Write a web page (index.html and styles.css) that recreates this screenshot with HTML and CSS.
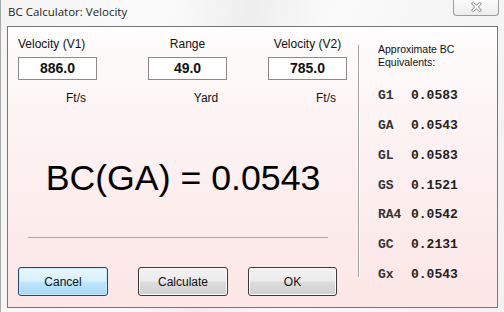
FILE: index.html
```html
<!DOCTYPE html>
<html lang="en">
<head>
    <meta charset="UTF-8">
    <title>BC Calculator: Velocity</title>
    <link rel="stylesheet" href="styles.css">
</head>
<body>
    <div class="window">
        <div class="titlebar">
            <span class="title">BC Calculator: Velocity</span>
            <div class="close">
                <svg width="13" height="10" viewBox="0 0 13 10">
                    <path d="M1.5 1.5 L3.5 0.5 L6.5 3 L9.5 0.5 L11.5 1.5 L8.5 5 L11.5 8.5 L9.5 9.5 L6.5 7 L3.5 9.5 L1.5 8.5 L4.5 5 Z" fill="#fafafa" stroke="#8c8c8c" stroke-width="1" stroke-linejoin="round"/>
                </svg>
            </div>
        </div>

        <div class="client">
            <div class="main">
                <div class="fields">
                    <div class="field first">
                        <div class="label">Velocity (V1)</div>
                        <div class="box">886.0</div>
                        <div class="unit">Ft/s</div>
                    </div>
                    <div class="field second">
                        <div class="label">Range</div>
                        <div class="box">49.0</div>
                        <div class="unit">Yard</div>
                    </div>
                    <div class="field">
                        <div class="label">Velocity (V2)</div>
                        <div class="box">785.0</div>
                        <div class="unit">Ft/s</div>
                    </div>
                </div>

                <div class="result">BC(GA) = 0.0543</div>

                <div class="rule"></div>

                <div class="buttons">
                    <button class="btn default">Cancel</button>
                    <button class="btn calc">Calculate</button>
                    <button class="btn ok">OK</button>
                </div>
            </div>

            <div class="divider"></div>

            <div class="side">
                <div class="side-head">Approximate BC<br>Equivalents:</div>
                <div class="eq-list">
                    <span class="eq-name">G1</span><span class="eq-val">0.0583</span>
                    <span class="eq-name">GA</span><span class="eq-val">0.0543</span>
                    <span class="eq-name">GL</span><span class="eq-val">0.0583</span>
                    <span class="eq-name">GS</span><span class="eq-val">0.1521</span>
                    <span class="eq-name">RA4</span><span class="eq-val">0.0542</span>
                    <span class="eq-name">GC</span><span class="eq-val">0.2131</span>
                    <span class="eq-name">Gx</span><span class="eq-val">0.0543</span>
                </div>
            </div>
        </div>
    </div>
</body>
</html>
```

FILE: styles.css
```css
body {
    margin: 0;
    font-family: "Liberation Sans", Arial, sans-serif;
    background: #f0f0f0;
}
.window {
    width: 504px;
    height: 312px;
    box-sizing: border-box;
    border-left: 1px solid #a8a8a8;
    background: linear-gradient(100deg, #f4f4f4 0%, #fbfbfb 30%, #eeeeee 45%, #fafafa 60%, #f2f2f2 100%);
    overflow: hidden;
}
.titlebar {
    height: 26px;
    display: flex;
    align-items: flex-start;
}
.title {
    font-family: "Open Sans", "Noto Sans", sans-serif;
    font-size: 11.5px;
    line-height: 16px;
    color: #1e1e1e;
    padding: 4px 0 0 7px;
}
.close {
    margin-left: auto;
    margin-right: 5px;
    margin-top: -1px;
    width: 46px;
    height: 17px;
    box-sizing: border-box;
    border: 1px solid #9c9c9c;
    border-top: none;
    border-radius: 0 0 4px 4px;
    background: linear-gradient(#fdfdfd, #ececec);
    display: flex;
    align-items: center;
    justify-content: center;
}
.client {
    margin: 0 6px 0 6px;
    height: 282px;
    box-sizing: border-box;
    border: 1px solid #777777;
    background: linear-gradient(#fefdfd 0%, #fdf2f2 40%, #fce6e6 100%);
    display: flex;
}
.main {
    width: 350px;
}
.fields {
    display: flex;
    padding: 10px 0 0 10px;
}
.field {
    width: 79px;
    display: flex;
    flex-direction: column;
    align-items: center;
    margin-right: 41px;
}
.field.first {
    margin-right: 51px;
    align-items: flex-start;
}
.label {
    font-size: 12px;
    line-height: 14px;
    color: #111;
}
.box {
    margin-top: 6px;
    width: 79px;
    height: 23px;
    box-sizing: border-box;
    border: 1px solid #8a8a8a;
    background: #fff;
    font-weight: bold;
    font-size: 14px;
    line-height: 21px;
    text-align: center;
    color: #111;
}
.unit {
    align-self: stretch;
    margin-top: 11px;
    padding-left: 37px;
    font-size: 12px;
    line-height: 14px;
    text-align: center;
    color: #111;
}
.result {
    margin-top: 53px;
    font-size: 35.7px;
    line-height: 40px;
    text-align: center;
    color: #000;
}
.rule {
    margin: 39px 0 0 20px;
    width: 300px;
    height: 1px;
    background: #a6a6a6;
}
.buttons {
    display: flex;
    margin: 29px 0 0 10px;
}
.btn {
    width: 90px;
    height: 29px;
    box-sizing: border-box;
    border: 1px solid #3a3a3a;
    border-radius: 3px;
    box-shadow: inset 0 0 0 1px #fbfbfb;
    background: linear-gradient(#f3f3f3 0%, #ebebeb 48%, #dddddd 52%, #d0d0d0 100%);
    font-family: "Liberation Sans", Arial, sans-serif;
    font-size: 12px;
    color: #111;
    padding: 0;
}
.btn.default {
    border-color: #24456e;
    box-shadow: inset 0 0 0 1px #c9ecfc;
    background: linear-gradient(#eaf6fd 0%, #d9f0fc 48%, #bee6fd 52%, #a7d9f5 100%);
    margin-right: 30px;
}
.btn.calc {
    margin-right: 20px;
}
.ok {
    width: 89px;
}
.divider {
    margin-top: 18px;
    width: 1px;
    height: 232px;
    background: #a2a2a2;
    border-right: 1px solid #ffffff;
}
.side {
    padding: 16px 0 0 18px;
}
.side-head {
    font-size: 10.5px;
    line-height: 13px;
    color: #111;
}
.eq-list {
    margin-top: 12px;
    display: grid;
    grid-template-columns: 33px auto;
    grid-auto-rows: 29.75px;
    align-items: center;
    font-family: "Liberation Mono", "Courier New", monospace;
    font-size: 13px;
    font-weight: bold;
}
.eq-name {
    color: #333;
}
.eq-val {
    color: #222;
}
```
